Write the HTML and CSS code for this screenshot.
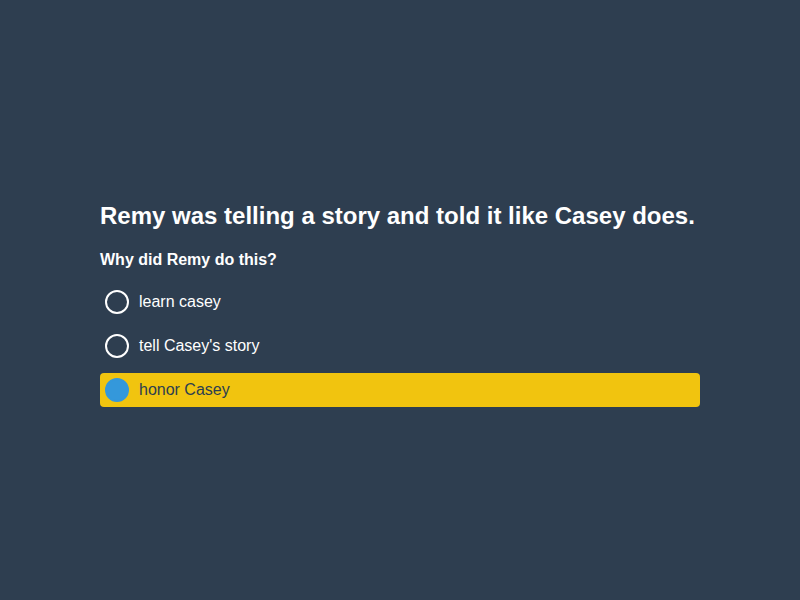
FILE: index.html
```html
<!DOCTYPE html>
<html lang="en">
<head>
<meta charset="utf-8">
<title>Question</title>
<link rel="stylesheet" href="styles.css">
</head>
<body>
<main class="quiz">
  <h1 class="context">Remy was telling a story and told it like Casey does.</h1>
  <h2 class="question">Why did Remy do this?</h2>
  <ul class="options">
    <li class="option"><span class="radio"></span><span class="label">learn casey</span></li>
    <li class="option"><span class="radio"></span><span class="label">tell Casey's story</span></li>
    <li class="option selected"><span class="radio"></span><span class="label">honor Casey</span></li>
  </ul>
</main>
</body>
</html>
```
FILE: styles.css
```css
html, body {
  margin: 0;
  padding: 0;
  height: 100%;
}
body {
  background: #2e3e50;
  font-family: "Liberation Sans", Arial, sans-serif;
  color: #ffffff;
}
.quiz {
  width: 600px;
  margin: 0 auto;
  padding-top: 202px;
}
.context {
  margin: 0;
  font-size: 24px;
  line-height: 28px;
  font-weight: bold;
}
.question {
  margin: 20px 0 0;
  font-size: 16px;
  line-height: 20px;
  font-weight: bold;
}
.options {
  list-style: none;
  margin: 15px 0 0;
  padding: 0;
  display: flex;
  flex-direction: column;
  gap: 10px;
}
.option {
  display: flex;
  align-items: center;
  gap: 10px;
  height: 34px;
  padding: 0 5px;
  border-radius: 4px;
  font-size: 16px;
}
.radio {
  box-sizing: border-box;
  width: 24px;
  height: 24px;
  border: 2px solid #ffffff;
  border-radius: 50%;
  flex: none;
}
.option.selected {
  background: #f1c40f;
  color: #2c3e50;
}
.option.selected .radio {
  background: #3498db;
  border-color: #3498db;
}
```
